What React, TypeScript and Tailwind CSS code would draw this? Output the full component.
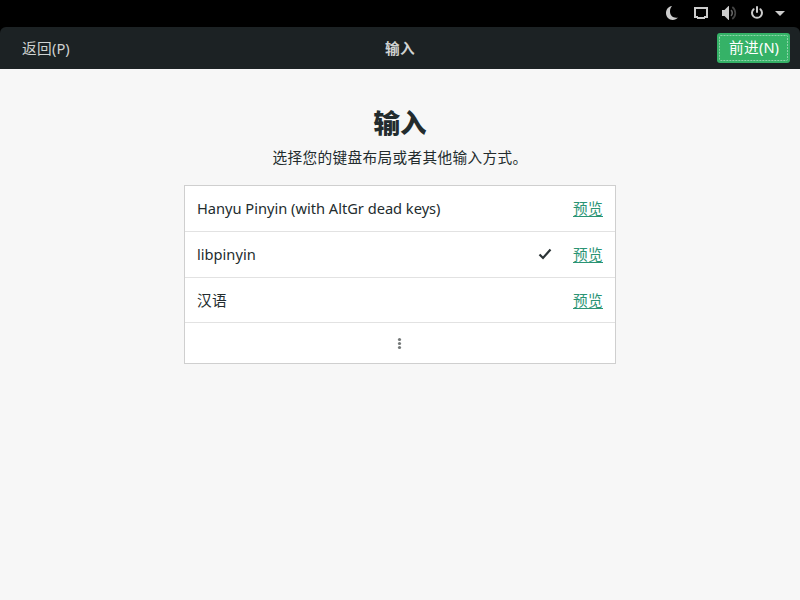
import React from "react";

type InputSource = { name: string; selected: boolean; height: string; text: string };

const sources: InputSource[] = [
  { name: "Hanyu Pinyin (with AltGr dead keys)", selected: false, height: "h-[46px] pb-[2px]", text: "tracking-[-0.020px]" },
  { name: "libpinyin", selected: true, height: "h-[46px] pb-[2px]", text: "" },
  { name: "汉语", selected: false, height: "h-[45px]", text: "tracking-[0.333px]" },
];

function StatusBar() {
  return (
    <div className="flex h-[27px] shrink-0 items-start justify-end bg-black pt-[5px] pr-[13px] text-[#cccccc]">
      <svg className="mr-[13px] h-4 w-4" viewBox="0 0 16 16" fill="currentColor">
        <path d="M8 1C4.500 1.500 2 4.400 2 8c0 3.900 3 7 6.700 7 2.200 0 4.100-.9 5.300-2.500C9.500 13.500 6 10.800 6 6.500 6 4.200 6.700 2.400 8 1z" />
      </svg>
      <svg className="mr-[12px] h-4 w-4" viewBox="0 0 16 16" fill="currentColor">
        <path fillRule="evenodd" d="M1 2h14v11h-3v1H4v-1H1zM3 4v7h2v1h6v-1h2V4z" />
      </svg>
      <svg className="mr-[12px] h-4 w-4" viewBox="0 0 16 16" fill="currentColor">
        <path d="M1 5h2.500L7.500 1H8v14h-.5l-4-4H1z" />
        <path d="M10 5.200c1.700 1.500 1.700 4.100 0 5.600" fill="none" stroke="#666666" strokeWidth="1.600" />
        <path d="M11.300 2c4 3 4 9 0 12" fill="none" stroke="#454545" strokeWidth="1.700" />
      </svg>
      <svg className="mr-[8px] h-4 w-4" viewBox="0 0 16 16" fill="none" stroke="currentColor" strokeWidth="2" strokeLinecap="round">
        <path d="M8 2v5M4.600 4.200a5 5 0 1 0 6.800 0" />
      </svg>
      <svg className="h-4 w-[14px]" viewBox="0 0 14 16" fill="currentColor">
        <path d="M2 6h10l-5 5z" />
      </svg>
    </div>
  );
}

function HeaderBar() {
  return (
    <div className="bg-black">
      <header className="grid h-[42px] grid-cols-3 items-center rounded-t-[6px] bg-[#1c2224] px-[10px] text-[#d0d3d2]">
        <button className="justify-self-start px-3 pb-px leading-5">
          <span className="tracking-[0.333px]">返回</span>(P)
        </button>
        <h1 className="justify-self-center font-bold leading-5 tracking-[0.333px]">输入</h1>
        <button className="h-[30px] w-[73px] justify-self-end rounded-[3px] bg-[#35b267] p-[2px] leading-5 text-white">
          <span className="relative flex h-full items-center justify-center pb-[2px] pl-px">
            <svg className="absolute inset-0 h-[26px] w-[69px]" viewBox="0 0 69 26" fill="none" stroke="#8dd4aa" strokeDasharray="2 1">
              <rect x="0.500" y="0.500" width="68" height="25" rx="1" />
            </svg>
            <span className="tracking-[0.333px]">前进</span>(N)
          </span>
        </button>
      </header>
    </div>
  );
}

function SourceRow({ source }: { source: InputSource }) {
  return (
    <li className={`flex items-center border-b border-[#e2e2e2] px-3 ${source.height}`}>
      <span className={`grow ${source.text}`}>{source.name}</span>
      {source.selected && (
        <svg className="mr-[20px] h-4 w-4" viewBox="0 0 16 16" fill="none" stroke="#2b3436" strokeWidth="2.200">
          <path d="M2.500 8.500l3.500 3.500 7.500-8.500" />
        </svg>
      )}
      <a className="tracking-[0.333px] text-[#2a9474] underline decoration-1 underline-offset-2">预览</a>
    </li>
  );
}

export default function App() {
  return (
    <div className="flex h-[600px] w-[800px] flex-col overflow-hidden bg-[#f7f7f7] font-['Noto_Sans','Noto_Sans_CJK_SC',sans-serif] text-[14.667px] leading-5 text-[#232c2e]">
      <StatusBar />
      <HeaderBar />
      <main className="flex flex-col items-center pt-[36px]">
        <h2 className="text-[26.500px] font-extrabold leading-9">输入</h2>
        <p className="mt-[6px] leading-5 tracking-[0.333px]">选择您的键盘布局或者其他输入方式。</p>
        <ul className="mt-[18px] w-[432px] border border-[#cfcfcf] bg-white">
          {sources.map((source) => (
            <SourceRow key={source.name} source={source} />
          ))}
          <li className="flex h-[40px] items-center justify-center">
            <svg className="h-4 w-4" viewBox="0 0 16 16" fill="#747878">
              <circle cx="7.500" cy="4.500" r="1.600" />
              <circle cx="7.500" cy="8.500" r="1.600" />
              <circle cx="7.500" cy="12.500" r="1.600" />
            </svg>
          </li>
        </ul>
      </main>
    </div>
  );
}
